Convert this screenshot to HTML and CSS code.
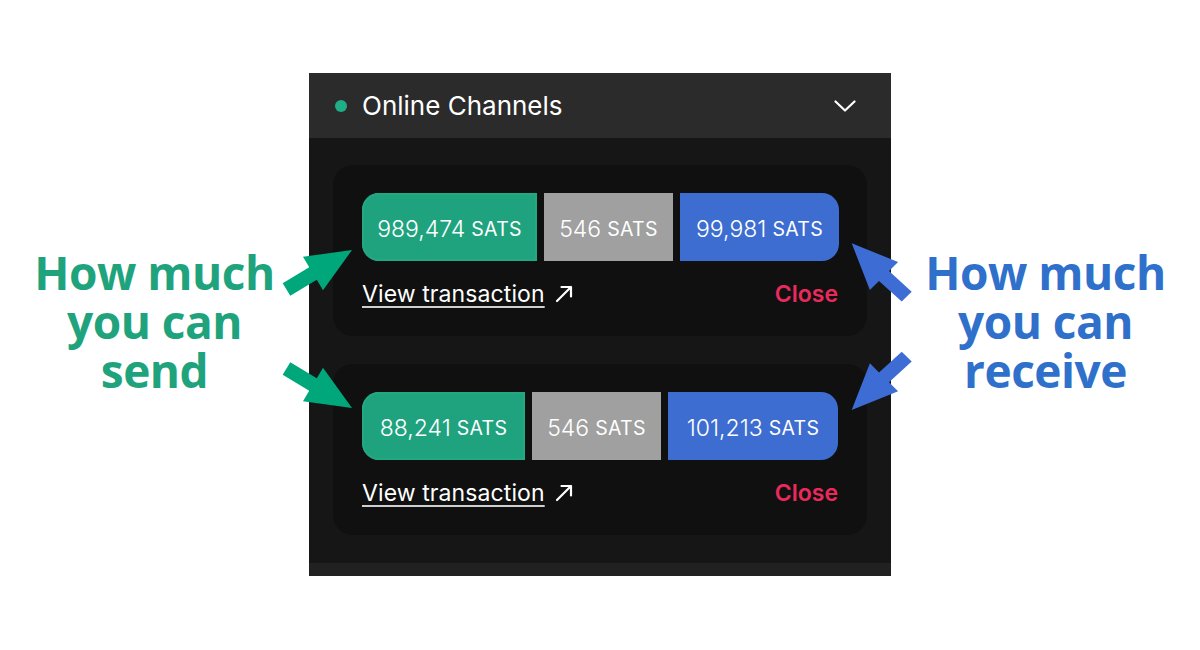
FILE: index.html
```html
<!DOCTYPE html>
<html lang="en">
<head>
<meta charset="utf-8">
<title>Online Channels</title>
<link rel="stylesheet" href="styles.css">
</head>
<body>
<div class="stage">
  <div class="label label-send">How much<br>you can<br>send</div>

  <section class="panel">
    <header class="panel-head">
      <span class="dot"></span>
      <span class="title">Online Channels</span>
      <svg class="chevron" width="22" height="12" viewBox="0 0 22 12"><path d="M1.5 1.5 L11 10.5 L20.5 1.5" fill="none" stroke="#fff" stroke-width="2.2" stroke-linecap="round" stroke-linejoin="round"/></svg>
    </header>
    <div class="panel-body">
      <div class="card">
        <div class="bar">
          <div class="seg seg-local" style="width:175px"><span class="amt">989,474</span><span class="unit">SATS</span></div>
          <div class="seg seg-reserve" style="width:129px"><span class="amt">546</span><span class="unit">SATS</span></div>
          <div class="seg seg-remote" style="width:159px"><span class="amt">99,981</span><span class="unit">SATS</span></div>
        </div>
        <div class="actions">
          <a class="view" href="#">View transaction</a>
          <svg class="ext" width="18" height="18" viewBox="0 0 18 18"><path d="M2 16 L16 2 M6.5 2 H16 V11.5" fill="none" stroke="#fff" stroke-width="2.2" stroke-linecap="round" stroke-linejoin="round"/></svg>
          <span class="close">Close</span>
        </div>
      </div>
      <div class="card">
        <div class="bar">
          <div class="seg seg-local" style="width:163px"><span class="amt">88,241</span><span class="unit">SATS</span></div>
          <div class="seg seg-reserve" style="width:129px"><span class="amt">546</span><span class="unit">SATS</span></div>
          <div class="seg seg-remote" style="width:170px"><span class="amt">101,213</span><span class="unit">SATS</span></div>
        </div>
        <div class="actions">
          <a class="view" href="#">View transaction</a>
          <svg class="ext" width="18" height="18" viewBox="0 0 18 18"><path d="M2 16 L16 2 M6.5 2 H16 V11.5" fill="none" stroke="#fff" stroke-width="2.2" stroke-linecap="round" stroke-linejoin="round"/></svg>
          <span class="close">Close</span>
        </div>
      </div>
    </div>
    <div class="panel-foot"></div>
  </section>

  <div class="label label-receive">How much<br>you can<br>receive</div>

  <svg class="arrows" width="1200" height="650" viewBox="0 0 1200 650">
    <polygon class="arrow-send" points="282.7,283.2 309.2,267.2 303,256.8 352,250 323,290.2 316.8,279.8 290.3,295.8"/>
    <polygon class="arrow-send" points="282.7,374.8 309.2,390.8 303,401.2 352,408 323,367.8 316.8,378.2 290.3,362.2"/>
    <polygon class="arrow-receive" points="911.7,291.8 889,271.1 898.1,262 851.7,243.3 869.9,290 879,280.9 901.7,301.6"/>
    <polygon class="arrow-receive" points="911.7,361.5 889,382.2 898.1,391.3 851.7,410 869.9,363.3 879,372.4 901.7,351.7"/>
  </svg>
</div>
</body>
</html>
```

FILE: styles.css
```css
* { box-sizing: border-box; }

html, body {
  margin: 0;
  padding: 0;
  background: #ffffff;
}

.stage {
  position: relative;
  width: 1200px;
  height: 650px;
  display: grid;
  grid-template-columns: 309px 582px 309px;
  align-items: start;
  padding-top: 73px;
  font-family: "Inter", "Liberation Sans", sans-serif;
}

.label {
  margin-top: 175px;
  font-family: "Open Sans", "Liberation Sans", sans-serif;
  font-weight: 700;
  font-size: 46px;
  line-height: 49px;
  letter-spacing: -0.5px;
  text-align: center;
}

.label-send { color: #1fa37d; }
.label-receive { color: #2f70cb; }

.panel {
  height: 503px;
  background: #161616;
  display: flex;
  flex-direction: column;
}

.panel-head {
  height: 65px;
  flex: none;
  background: #2b2b2b;
  display: flex;
  align-items: center;
  padding: 0 35px 0 26px;
}

.dot {
  width: 12px;
  height: 12px;
  border-radius: 50%;
  background: #1fae85;
  flex: none;
}

.title {
  margin-left: 15px;
  color: #ffffff;
  font-size: 26px;
  font-weight: 400;
  letter-spacing: 0;
  flex: 1;
}

.chevron { display: block; }

.panel-body {
  flex: 1;
  padding: 27px 24px 28px;
  display: flex;
  flex-direction: column;
  gap: 28px;
}

.card {
  height: 171px;
  background: #101010;
  border-radius: 20px;
  padding: 28px 29px 0;
}

.bar {
  display: flex;
  gap: 7px;
  height: 68px;
}

.seg {
  display: flex;
  align-items: center;
  justify-content: center;
  gap: 6px;
  padding-top: 4px;
  color: #ffffff;
  flex: none;
}

.seg-local {
  background: #1fa37f;
  border-radius: 17px 0 0 17px;
  box-shadow: inset 0 0 0 2px #22a983;
}

.seg-reserve { background: #a0a0a0; }

.seg-remote {
  background: #3d6dd0;
  border-radius: 0 17px 17px 0;
}

.amt {
  font-size: 23px;
  font-weight: 300;
  letter-spacing: 0;
}

.unit {
  font-size: 19.5px;
  font-weight: 400;
  letter-spacing: 0.3px;
}

.actions {
  margin-top: 20px;
  height: 26px;
  display: flex;
  align-items: center;
}

.view {
  color: #ffffff;
  font-size: 23px;
  font-weight: 400;
  letter-spacing: 0.1px;
  text-decoration: underline;
  text-decoration-thickness: 1.5px;
  text-underline-offset: 4px;
  text-decoration-color: #cfcfcf;
}

.ext {
  margin-left: 10px;
  display: block;
}

.close {
  margin-left: auto;
  color: #ea2a5c;
  font-size: 23px;
  font-weight: 600;
}

.panel-foot {
  height: 13px;
  flex: none;
  background: #212121;
}

.arrows {
  position: absolute;
  left: 0;
  top: 0;
  pointer-events: none;
}

.arrow-send { fill: #00a77b; }
.arrow-receive { fill: #3d6dd4; }
```
